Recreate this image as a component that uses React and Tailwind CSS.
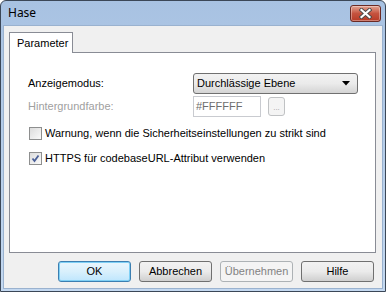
import React from "react";

const font = { fontFamily: '"Liberation Sans", Arial, sans-serif' };

function CloseButton() {
  return (
    <div className="flex h-[17px] w-[31px] items-center justify-center rounded-[3px] border border-[#6b2a24] bg-gradient-to-b from-[#e2a393] via-[#c5533f] to-[#b63a26] shadow-[inset_0_0_0_1px_rgba(255,255,255,0.35)]">
      <svg width="13" height="11" viewBox="0 0 13 11">
        <path d="M2.5 2 L10.5 9 M10.5 2 L2.5 9" stroke="#4a4a4a" strokeWidth="4" strokeLinecap="square" />
        <path d="M2.5 2 L10.5 9 M10.5 2 L2.5 9" stroke="#ffffff" strokeWidth="2.2" strokeLinecap="square" />
      </svg>
    </div>
  );
}

function Checkbox({ checked }) {
  return (
    <div className="flex h-[13px] w-[13px] shrink-0 items-center justify-center border border-[#8e8f8f] bg-white">
      <div className="flex h-[11px] w-[11px] items-center justify-center bg-gradient-to-br from-[#dcdcdc] to-[#fafafa]">
        {checked && (
          <svg width="9" height="9" viewBox="0 0 9 9">
            <path d="M1.5 4.5 L3.5 7 L7.5 1.5" stroke="#4a5f97" strokeWidth="1.8" fill="none" />
          </svg>
        )}
      </div>
    </div>
  );
}

function DialogButton({ children, isDefault, disabled }) {
  let cls = "border-[#707070] text-black bg-gradient-to-b from-[#f2f2f2] via-[#ebebeb] to-[#cfcfcf]";
  if (isDefault) cls = "border-[#3c7fb1] text-black bg-gradient-to-b from-[#eaf6fd] via-[#d9f0fc] to-[#bee6fd] shadow-[inset_0_0_0_1px_#7fd0f5]";
  if (disabled) cls = "border-[#adb2b5] text-[#838383] bg-[#f4f4f4]";
  return (
    <div className={`flex h-[21px] w-[73px] items-center justify-center rounded-[3px] border text-[11px] ${cls}`}>
      {children}
    </div>
  );
}

export default function App() {
  return (
    <div style={font} className="h-[292px] w-[386px] overflow-hidden">
      <div className="flex h-full w-full flex-col rounded-t-[6px] border border-[#3b4757] bg-gradient-to-b from-[#a8c2e2] to-[#c3d8f0]">
        {/* title bar */}
        <div className="flex h-[24px] shrink-0 items-start justify-between pl-[7px] pr-[4px] pt-[4px]">
          <span className="text-[12px] leading-[15px] text-black" style={{ fontFamily: '"Noto Sans", "Liberation Sans", sans-serif' }}>Hase</span>
          <CloseButton />
        </div>

        {/* client area */}
        <div className="mx-[2px] mb-[2px] flex flex-1 flex-col border border-[#9ab2cf] bg-[#f0f0f0] px-[5px] pt-[6px]">
          {/* tab header */}
          <div className="flex">
            <div className="relative z-10 -mb-px flex h-[21px] w-[64px] items-center border border-b-0 border-[#898c95] bg-white pl-[7px] text-[11px] text-black">
              Parameter
            </div>
          </div>

          {/* tab panel */}
          <div className="flex h-[201px] w-[367px] flex-col border border-[#898c95] bg-white pl-[18px] pt-[20px] text-[11px] text-black">
            <div className="grid grid-cols-[165px_1fr] items-center gap-y-[2px]">
              <span>Anzeigemodus:</span>
              <div className="flex h-[21px] w-[165px] items-center justify-between rounded-[3px] border border-[#707070] bg-gradient-to-b from-[#f2f2f2] via-[#ebebeb] to-[#d4d4d4] pl-[3px] pr-[7px]">
                <span>Durchlässige Ebene</span>
                <svg width="8" height="5" viewBox="0 0 8 5">
                  <path d="M0 0 H8 L4 4.5 Z" fill="#000" />
                </svg>
              </div>
              <span className="text-[#a0a0a0]">Hintergrundfarbe:</span>
              <div className="flex items-center gap-[7px]">
                <div className="flex h-[21px] w-[68px] items-center border border-[#c9cbd0] bg-white pl-[2px] text-[#6d6d6d]">
                  #FFFFFF
                </div>
                <div className="flex h-[19px] w-[17px] items-end justify-center rounded-[3px] border border-[#c0c2c4] bg-[#f4f4f4] pb-[3px] text-[8px] leading-none text-[#a0a0a0]">
                  ...
                </div>
              </div>
            </div>

            <div className="mt-[10px] flex h-[13px] items-center gap-[3px] pl-px leading-[13px]">
              <Checkbox />
              <span>Warnung, wenn die Sicherheitseinstellungen zu strikt sind</span>
            </div>
            <div className="mt-[12px] flex h-[13px] items-center gap-[3px] pl-px leading-[13px]">
              <Checkbox checked />
              <span>HTTPS für codebaseURL-Attribut verwenden</span>
            </div>
          </div>

          {/* button row */}
          <div className="mt-[8px] flex justify-end gap-[8px] pr-[3px]">
            <DialogButton isDefault>OK</DialogButton>
            <DialogButton>Abbrechen</DialogButton>
            <DialogButton disabled>Übernehmen</DialogButton>
            <DialogButton>Hilfe</DialogButton>
          </div>
        </div>
      </div>
    </div>
  );
}
